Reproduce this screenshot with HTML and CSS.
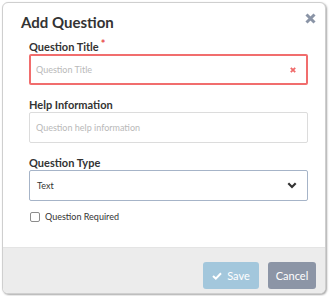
FILE: index.html
```html
<!DOCTYPE html>
<html lang="en">
<head>
    <meta charset="UTF-8">
    <title>Add Question</title>
    <link rel="stylesheet" href="styles.css">
</head>
<body>
    <div class="modal">
        <div class="modal-header">
            <h1>Add Question</h1>
            <button class="close-btn" aria-label="Close">
                <svg width="11" height="11" viewBox="0 0 11 11"><path d="M1.5 1.5 L9.5 9.5 M9.5 1.5 L1.5 9.5" stroke="#8a94a6" stroke-width="3"/></svg>
            </button>
        </div>

        <div class="modal-body">
            <div class="field">
                <label>Question Title<span class="required">*</span></label>
                <div class="input-wrap">
                    <input type="text" class="input input-error" placeholder="Question Title">
                    <svg class="error-icon" width="6" height="6" viewBox="0 0 6 6"><path d="M0.8 0.8 L5.2 5.2 M5.2 0.8 L0.8 5.2" stroke="#f06a6a" stroke-width="1.8"/></svg>
                </div>
            </div>

            <div class="field">
                <label>Help Information</label>
                <input type="text" class="input" placeholder="Question help information">
            </div>

            <div class="field">
                <label>Question Type</label>
                <div class="select">
                    <span>Text</span>
                    <svg width="10" height="7" viewBox="0 0 10 7"><path d="M1.3 1.3 L5 5 L8.7 1.3" stroke="#333" stroke-width="2.2" fill="none"/></svg>
                </div>
            </div>

            <label class="checkbox">
                <span class="box"></span>
                Question Required
            </label>
        </div>

        <div class="modal-footer">
            <button class="btn btn-save">
                <svg width="10" height="8" viewBox="0 0 10 8"><path d="M1 4 L3.8 6.6 L9 1.2" stroke="#fff" stroke-width="2" fill="none"/></svg>
                Save
            </button>
            <button class="btn btn-cancel">Cancel</button>
        </div>
    </div>
</body>
</html>
```

FILE: styles.css
```css
* {
    margin: 0;
    padding: 0;
    box-sizing: border-box;
}

body {
    font-family: 'Lato', 'Liberation Sans', sans-serif;
    color: #333;
    background-color: #fff;
    padding: 2px;
}

.modal {
    width: 324px;
    height: 292px;
    border: 1px solid #cfcfcf;
    border-radius: 6px;
    box-shadow: 1px 1px 2px rgba(0,0,0,0.35);
    background-color: #fff;
    display: flex;
    flex-direction: column;
    overflow: hidden;
}

.modal-header {
    display: flex;
    justify-content: space-between;
    align-items: flex-start;
    padding: 8px 9px 0 18px;
}

.modal-header h1 {
    font-size: 15px;
    font-weight: 700;
    line-height: 22px;
    color: #333;
}

.close-btn {
    background: none;
    border: none;
    margin-top: 2px;
    line-height: 0;
}

.modal-body {
    flex: 1;
    padding: 6px 18px 0 26px;
}

.field {
    margin-bottom: 12px;
}

.field label {
    display: block;
    font-size: 11px;
    font-weight: 700;
    line-height: 15px;
    color: #333;
}

.required {
    color: #e84b4b;
    margin-left: 2px;
    position: relative;
    top: -3px;
}

.input-wrap {
    position: relative;
}

.input {
    display: block;
    width: 279px;
    height: 31px;
    border: 1px solid #dcdcdc;
    border-radius: 2px;
    padding: 0 6px;
    font-family: inherit;
    font-size: 9px;
    color: #333;
    outline: none;
}

.input::placeholder {
    color: #b9b9b9;
}

.input-error {
    border: 2px solid #f16d6d;
    padding: 0 5px;
}

.error-icon {
    position: absolute;
    right: 11px;
    top: 13px;
}

.select {
    width: 279px;
    height: 31px;
    border: 1px solid #a6b4c8;
    border-radius: 2px;
    display: flex;
    align-items: center;
    justify-content: space-between;
    padding: 0 10px 0 7px;
    font-size: 9px;
}

.checkbox {
    display: flex;
    align-items: center;
    font-size: 9px;
    color: #333;
    margin-top: -2px;
}

.box {
    width: 10px;
    height: 10px;
    border: 1px solid #8c8c8c;
    border-radius: 2px;
    margin: 0 5px 0 1px;
}

.modal-footer {
    background-color: #ececec;
    border-top: 1px solid #e4e4e4;
    height: 46px;
    display: flex;
    justify-content: flex-end;
    align-items: flex-start;
    gap: 9px;
    padding: 14px 9px 0 0;
}

.btn {
    height: 27px;
    border: none;
    border-radius: 3px;
    color: #fff;
    font-family: inherit;
    font-size: 11px;
    font-weight: 400;
    display: flex;
    align-items: center;
    justify-content: center;
    gap: 5px;
}

.btn-save {
    width: 56px;
    background-color: #a3c7dc;
}

.btn-cancel {
    width: 48px;
    background-color: #8c95a6;
}
```
